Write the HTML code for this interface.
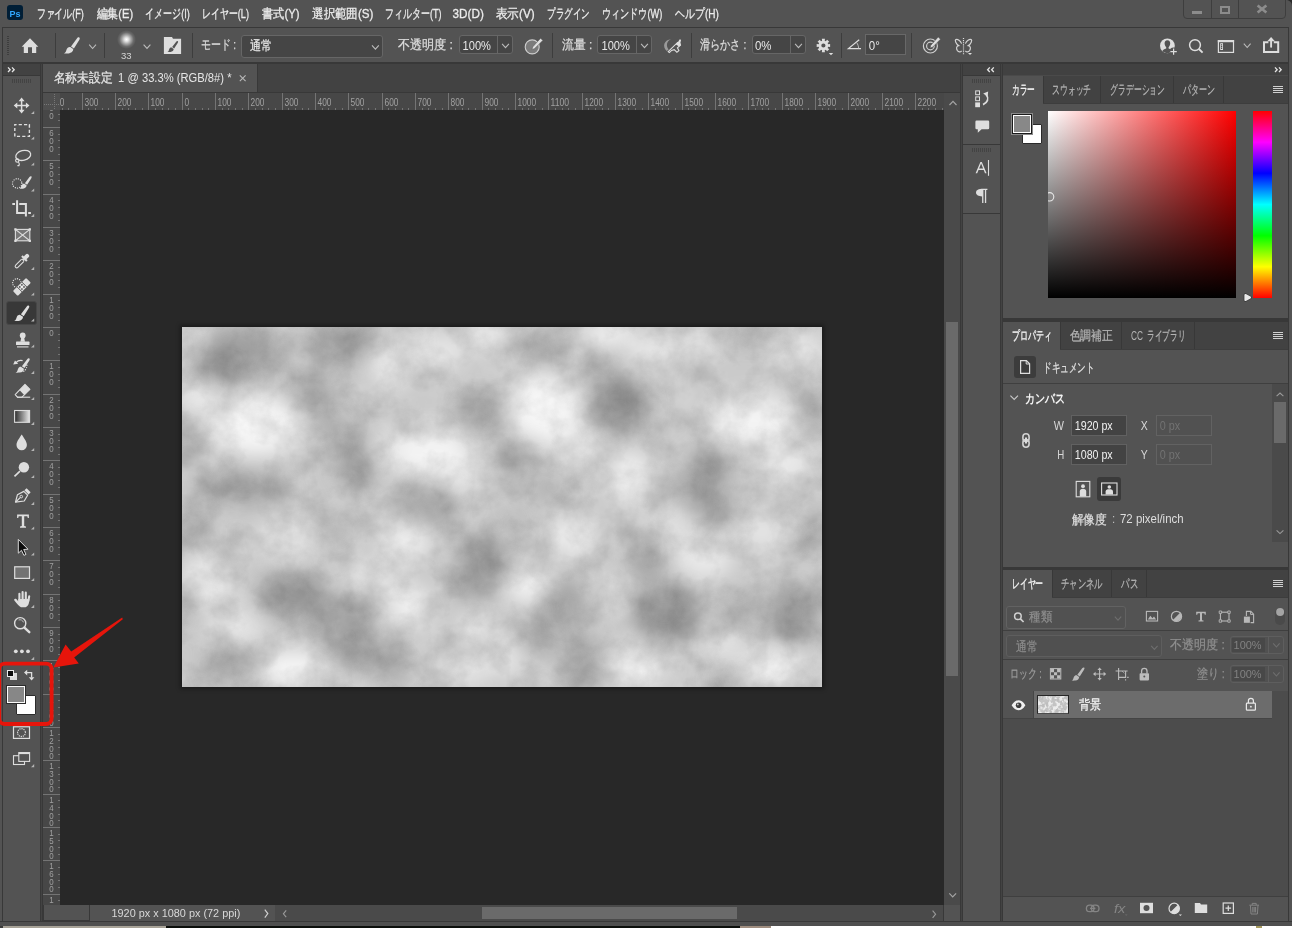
<!DOCTYPE html>
<html lang="ja"><head><meta charset="utf-8"><title>Photoshop</title>
<style>
html,body{margin:0;padding:0;}
body{width:1292px;height:928px;overflow:hidden;background:#535353;position:relative;
font-family:"Liberation Sans",sans-serif;font-size:12px;color:#dcdcdc;}
div{position:absolute;box-sizing:border-box;}
svg{position:absolute;left:0;top:0;overflow:visible;}
svg text{font-family:"Liberation Sans",sans-serif;}
</style></head><body>

<!-- menu bar -->
<div style="left:0px;top:0px;width:1292px;height:27px;background:#535353;"></div>
<div style="left:7px;top:5px;width:16px;height:15px;background:#001e36;border-radius:3px;"></div>
<div style="left:1183px;top:-2px;width:103px;height:21px;border:1px solid #3e3e3e;border-radius:0 0 4px 4px;"></div>
<div style="left:1211px;top:0px;width:1px;height:18px;background:#3e3e3e;"></div>
<div style="left:1238px;top:0px;width:1px;height:18px;background:#3e3e3e;"></div>
<div style="left:1192px;top:11px;width:10px;height:3px;background:#8c8c8c;"></div>
<div style="left:1220px;top:6px;width:10px;height:8px;border:2px solid #8c8c8c;"></div>
<!-- options bar -->
<div style="left:2px;top:27px;width:1287px;height:36px;background:#535353;border:1px solid #383838;"></div>
<div style="left:1289px;top:27px;width:3px;height:901px;background:#535353;"></div>
<div style="left:0px;top:27px;width:2px;height:901px;background:#535353;"></div>
<div style="left:55px;top:33px;width:1px;height:25px;background:#3d3d3d;"></div>
<div style="left:104px;top:33px;width:1px;height:25px;background:#3d3d3d;"></div>
<div style="left:117px;top:30px;width:19px;height:19px;border-radius:50%;background:radial-gradient(circle closest-side,#fff 0%,#e8e8e8 18%,rgba(200,200,200,.75) 45%,rgba(150,150,150,.35) 75%,rgba(83,83,83,0) 100%);"></div>
<div style="left:192px;top:33px;width:1px;height:25px;background:#3d3d3d;"></div>
<div style="left:241px;top:35px;width:142px;height:23px;background:#454545;border:1px solid #666;border-radius:3px;"></div>
<div style="left:459px;top:35px;width:54px;height:19px;background:#454545;border:1px solid #666;border-radius:3px;"></div>
<div style="left:497px;top:36px;width:1px;height:17px;background:#666;"></div>
<div style="left:552px;top:33px;width:1px;height:25px;background:#3d3d3d;"></div>
<div style="left:597px;top:35px;width:55px;height:19px;background:#454545;border:1px solid #666;border-radius:3px;"></div>
<div style="left:636px;top:36px;width:1px;height:17px;background:#666;"></div>
<div style="left:691px;top:33px;width:1px;height:25px;background:#3d3d3d;"></div>
<div style="left:752px;top:35px;width:54px;height:19px;background:#454545;border:1px solid #666;border-radius:3px;"></div>
<div style="left:790px;top:36px;width:1px;height:17px;background:#666;"></div>
<div style="left:841px;top:33px;width:1px;height:25px;background:#3d3d3d;"></div>
<div style="left:865px;top:34px;width:41px;height:21px;background:#454545;border:1px solid #686868;"></div>
<div style="left:911px;top:33px;width:1px;height:25px;background:#3d3d3d;"></div>
<!-- workspace -->
<div style="left:2px;top:63px;width:1287px;height:862px;background:#383838;"></div>
<div style="left:41px;top:64px;width:1px;height:857px;background:#434343;"></div>
<div style="left:961px;top:64px;width:1px;height:857px;background:#434343;"></div>
<div style="left:1001px;top:64px;width:1px;height:857px;background:#434343;"></div>
<div style="left:3px;top:64px;width:37px;height:857px;background:#535353;"></div>
<div style="left:3px;top:64px;width:37px;height:11px;background:#424242;"></div>
<div style="left:3px;top:75px;width:37px;height:1px;background:#383838;"></div>
<div style="left:43px;top:64px;width:917px;height:28px;background:#424242;"></div>
<div style="left:43px;top:64px;width:214px;height:28px;background:#535353;"></div>
<div style="left:43px;top:92px;width:917px;height:1px;background:#383838;"></div>
<div style="left:43px;top:93px;width:901px;height:17px;background:#474747;"></div>
<div style="left:43px;top:93px;width:17px;height:812px;background:#474747;"></div>
<div style="left:43px;top:93px;width:17px;height:17px;background:#4f4f4f;"></div>
<div style="left:60px;top:110px;width:884px;height:795px;background:#282828;"></div>
<div style="left:944px;top:93px;width:16px;height:812px;background:#4a4a4a;"></div>
<div style="left:946px;top:322px;width:12px;height:354px;background:#6a6a6a;"></div>
<div style="left:43px;top:905px;width:917px;height:16px;background:#4a4a4a;"></div>
<div style="left:43px;top:905px;width:232px;height:16px;background:#535353;"></div>
<div style="left:43px;top:905px;width:47px;height:16px;border:1px solid #383838;border-top:none;background:#535353;"></div>
<div style="left:482px;top:907px;width:255px;height:12px;background:#6a6a6a;"></div>
<div style="left:944px;top:905px;width:16px;height:16px;background:#535353;"></div>
<div style="left:943px;top:905px;width:18px;height:16px;border-left:1px solid #383838;"></div>
<div style="left:963px;top:64px;width:37px;height:857px;background:#535353;"></div>
<div style="left:963px;top:64px;width:37px;height:11px;background:#424242;"></div>
<div style="left:963px;top:75px;width:37px;height:1px;background:#383838;"></div>
<div style="left:963px;top:144px;width:37px;height:1.4px;background:#383838;"></div>
<div style="left:963px;top:213px;width:37px;height:1px;background:#383838;"></div>
<div style="left:1003px;top:64px;width:285px;height:12px;background:#414141;"></div>
<div style="left:1003px;top:75px;width:285px;height:1px;background:#4a4a4a;"></div>
<div style="left:1003px;top:76px;width:285px;height:242px;background:#535353;"></div>
<div style="left:1003px;top:76px;width:285px;height:27px;background:#424242;"></div>
<div style="left:1003px;top:322px;width:285px;height:245px;background:#535353;"></div>
<div style="left:1003px;top:322px;width:285px;height:27px;background:#424242;"></div>
<div style="left:1003px;top:570px;width:285px;height:351px;background:#535353;"></div>
<div style="left:1003px;top:570px;width:285px;height:27px;background:#424242;"></div>
<div style="left:0px;top:921px;width:1292px;height:1px;background:#383838;"></div>
<div style="left:0px;top:922px;width:1292px;height:4px;background:#4f4f4f;"></div>
<div style="left:0px;top:926px;width:1292px;height:2px;background:#ffffff;"></div>
<div style="left:0px;top:926px;width:166px;height:2px;background:#a8a398;"></div>
<div style="left:0px;top:926px;width:3px;height:2px;background:#3a3a3a;"></div>
<div style="left:166px;top:926px;width:574px;height:2px;background:#0c0f0c;"></div>
<div style="left:740px;top:926px;width:31px;height:2px;background:#a08e80;"></div>
<div style="left:1256px;top:926px;width:6px;height:2px;background:#a89c60;"></div>
<!-- tools -->
<div style="left:6px;top:301px;width:31px;height:24px;background:#383838;border:1px solid #474747;border-radius:3px;"></div>
<div style="left:10.1px;top:673px;width:6.9px;height:7.2px;background:#dcdcdc;"></div>
<div style="left:6.9px;top:670px;width:7.2px;height:7px;background:#0c0c0c;border:1.1px solid #ececec;"></div>
<div style="left:16.4px;top:695.4px;width:19.4px;height:19.2px;background:#fff;border:1px solid #2c2c2c;border-radius:1px;"></div>
<div style="left:7.2px;top:686.1px;width:17.5px;height:17.4px;background:#878787;border:1.3px solid #fafafa;outline:1px solid #2c2c2c;"></div>
<!-- document canvas -->
<div style="left:180px;top:325px;width:644px;height:364px;background:rgba(0,0,0,.35);filter:blur(2px);"></div>
<svg style="left:182px;top:327px" width="640" height="360" viewBox="0 0 640 360">
<defs><filter id="bl" x="-20%" y="-20%" width="140%" height="140%"><feGaussianBlur stdDeviation="10"/></filter>
<filter id="nz" x="0" y="0" width="100%" height="100%"><feTurbulence type="fractalNoise" baseFrequency="0.035" numOctaves="4" seed="11"/><feColorMatrix type="matrix" values="0 0 0 0 0  0 0 0 0 0  0 0 0 0 0  1.6 0 0 0 -0.55"/></filter>
<filter id="nz2" x="0" y="0" width="100%" height="100%"><feTurbulence type="fractalNoise" baseFrequency="0.035" numOctaves="4" seed="23"/><feColorMatrix type="matrix" values="0 0 0 0 1  0 0 0 0 1  0 0 0 0 1  1.6 0 0 0 -0.55"/></filter>
<clipPath id="cc"><rect width="640" height="360"/></clipPath></defs>
<g clip-path="url(#cc)"><rect width="640" height="360" fill="#cacaca"/>
<g filter="url(#bl)">
<ellipse cx="57" cy="27" rx="42" ry="26" fill="#8a8a8a" opacity="0.68"/>
<ellipse cx="32" cy="45" rx="28" ry="20" fill="#8a8a8a" opacity="0.45"/>
<ellipse cx="161" cy="17" rx="36" ry="22" fill="#8a8a8a" opacity="0.68"/>
<ellipse cx="129" cy="67" rx="28" ry="22" fill="#8a8a8a" opacity="0.45"/>
<ellipse cx="173" cy="134" rx="22" ry="30" fill="#8a8a8a" opacity="0.68"/>
<ellipse cx="300" cy="84" rx="24" ry="20" fill="#8a8a8a" opacity="0.63"/>
<ellipse cx="62" cy="161" rx="50" ry="17" fill="#8a8a8a" opacity="0.63"/>
<ellipse cx="248" cy="173" rx="26" ry="16" fill="#8a8a8a" opacity="0.54"/>
<ellipse cx="153" cy="99" rx="20" ry="18" fill="#8a8a8a" opacity="0.41"/>
<ellipse cx="5" cy="106" rx="14" ry="22" fill="#8a8a8a" opacity="0.41"/>
<ellipse cx="362" cy="22" rx="24" ry="16" fill="#8a8a8a" opacity="0.54"/>
<ellipse cx="439" cy="79" rx="32" ry="26" fill="#8a8a8a" opacity="0.81"/>
<ellipse cx="421" cy="45" rx="16" ry="16" fill="#8a8a8a" opacity="0.54"/>
<ellipse cx="335" cy="129" rx="22" ry="15" fill="#8a8a8a" opacity="0.54"/>
<ellipse cx="525" cy="149" rx="26" ry="30" fill="#8a8a8a" opacity="0.63"/>
<ellipse cx="568" cy="7" rx="26" ry="12" fill="#8a8a8a" opacity="0.45"/>
<ellipse cx="632" cy="84" rx="18" ry="24" fill="#8a8a8a" opacity="0.45"/>
<ellipse cx="370" cy="161" rx="24" ry="14" fill="#8a8a8a" opacity="0.36"/>
<ellipse cx="498" cy="165" rx="22" ry="14" fill="#8a8a8a" opacity="0.36"/>
<ellipse cx="109" cy="267" rx="32" ry="26" fill="#8a8a8a" opacity="0.72"/>
<ellipse cx="161" cy="294" rx="32" ry="30" fill="#8a8a8a" opacity="0.68"/>
<ellipse cx="175" cy="322" rx="24" ry="20" fill="#8a8a8a" opacity="0.54"/>
<ellipse cx="297" cy="244" rx="26" ry="36" fill="#8a8a8a" opacity="0.68"/>
<ellipse cx="42" cy="338" rx="18" ry="22" fill="#8a8a8a" opacity="0.68"/>
<ellipse cx="12" cy="202" rx="22" ry="20" fill="#8a8a8a" opacity="0.41"/>
<ellipse cx="248" cy="186" rx="30" ry="14" fill="#8a8a8a" opacity="0.54"/>
<ellipse cx="205" cy="340" rx="24" ry="18" fill="#8a8a8a" opacity="0.45"/>
<ellipse cx="149" cy="202" rx="22" ry="16" fill="#8a8a8a" opacity="0.36"/>
<ellipse cx="0" cy="284" rx="12" ry="24" fill="#8a8a8a" opacity="0.36"/>
<ellipse cx="483" cy="286" rx="36" ry="30" fill="#8a8a8a" opacity="0.81"/>
<ellipse cx="464" cy="234" rx="18" ry="18" fill="#8a8a8a" opacity="0.63"/>
<ellipse cx="382" cy="279" rx="22" ry="28" fill="#8a8a8a" opacity="0.59"/>
<ellipse cx="402" cy="333" rx="20" ry="26" fill="#8a8a8a" opacity="0.63"/>
<ellipse cx="357" cy="309" rx="22" ry="20" fill="#8a8a8a" opacity="0.45"/>
<ellipse cx="612" cy="286" rx="30" ry="30" fill="#8a8a8a" opacity="0.68"/>
<ellipse cx="632" cy="205" rx="16" ry="22" fill="#8a8a8a" opacity="0.45"/>
<ellipse cx="530" cy="183" rx="26" ry="12" fill="#8a8a8a" opacity="0.5"/>
<ellipse cx="320" cy="230" rx="14" ry="20" fill="#8a8a8a" opacity="0.45"/>
<ellipse cx="332" cy="192" rx="18" ry="14" fill="#8a8a8a" opacity="0.36"/>
<ellipse cx="555" cy="284" rx="22" ry="22" fill="#8a8a8a" opacity="0.36"/>
<ellipse cx="550" cy="354" rx="30" ry="10" fill="#8a8a8a" opacity="0.36"/>
<ellipse cx="74" cy="99" rx="46" ry="30" fill="#ffffff" opacity="0.82"/>
<ellipse cx="210" cy="37" rx="20" ry="26" fill="#ffffff" opacity="0.6"/>
<ellipse cx="260" cy="25" rx="26" ry="18" fill="#ffffff" opacity="0.52"/>
<ellipse cx="305" cy="8" rx="20" ry="12" fill="#ffffff" opacity="0.69"/>
<ellipse cx="248" cy="124" rx="40" ry="25" fill="#ffffff" opacity="0.77"/>
<ellipse cx="198" cy="126" rx="18" ry="16" fill="#ffffff" opacity="0.43"/>
<ellipse cx="7" cy="7" rx="16" ry="12" fill="#ffffff" opacity="0.52"/>
<ellipse cx="15" cy="69" rx="18" ry="18" fill="#ffffff" opacity="0.6"/>
<ellipse cx="280" cy="149" rx="22" ry="16" fill="#ffffff" opacity="0.52"/>
<ellipse cx="426" cy="7" rx="26" ry="12" fill="#ffffff" opacity="0.77"/>
<ellipse cx="362" cy="82" rx="36" ry="34" fill="#ffffff" opacity="0.82"/>
<ellipse cx="473" cy="25" rx="26" ry="18" fill="#ffffff" opacity="0.52"/>
<ellipse cx="568" cy="92" rx="42" ry="26" fill="#ffffff" opacity="0.77"/>
<ellipse cx="449" cy="151" rx="20" ry="26" fill="#ffffff" opacity="0.77"/>
<ellipse cx="605" cy="136" rx="26" ry="20" fill="#ffffff" opacity="0.6"/>
<ellipse cx="617" cy="25" rx="24" ry="20" fill="#ffffff" opacity="0.52"/>
<ellipse cx="394" cy="119" rx="22" ry="18" fill="#ffffff" opacity="0.52"/>
<ellipse cx="518" cy="17" rx="22" ry="14" fill="#ffffff" opacity="0.47"/>
<ellipse cx="106" cy="212" rx="30" ry="18" fill="#ffffff" opacity="0.56"/>
<ellipse cx="25" cy="252" rx="24" ry="22" fill="#ffffff" opacity="0.65"/>
<ellipse cx="111" cy="341" rx="32" ry="18" fill="#ffffff" opacity="0.82"/>
<ellipse cx="223" cy="215" rx="26" ry="18" fill="#ffffff" opacity="0.69"/>
<ellipse cx="188" cy="254" rx="22" ry="18" fill="#ffffff" opacity="0.52"/>
<ellipse cx="228" cy="279" rx="22" ry="20" fill="#ffffff" opacity="0.73"/>
<ellipse cx="285" cy="341" rx="26" ry="16" fill="#ffffff" opacity="0.52"/>
<ellipse cx="297" cy="299" rx="20" ry="16" fill="#ffffff" opacity="0.52"/>
<ellipse cx="50" cy="299" rx="26" ry="18" fill="#ffffff" opacity="0.52"/>
<ellipse cx="389" cy="210" rx="26" ry="20" fill="#ffffff" opacity="0.6"/>
<ellipse cx="345" cy="257" rx="22" ry="20" fill="#ffffff" opacity="0.73"/>
<ellipse cx="523" cy="232" rx="28" ry="20" fill="#ffffff" opacity="0.6"/>
<ellipse cx="456" cy="338" rx="26" ry="20" fill="#ffffff" opacity="0.77"/>
<ellipse cx="592" cy="341" rx="34" ry="16" fill="#ffffff" opacity="0.77"/>
<ellipse cx="327" cy="333" rx="14" ry="18" fill="#ffffff" opacity="0.52"/>
<ellipse cx="580" cy="205" rx="22" ry="18" fill="#ffffff" opacity="0.52"/>
<ellipse cx="434" cy="267" rx="16" ry="16" fill="#ffffff" opacity="0.47"/>
<ellipse cx="493" cy="200" rx="22" ry="14" fill="#ffffff" opacity="0.43"/>
<ellipse cx="543" cy="316" rx="20" ry="14" fill="#ffffff" opacity="0.47"/>
</g>
<rect width="640" height="360" filter="url(#nz)" opacity=".14"/>
<rect width="640" height="360" filter="url(#nz2)" opacity=".16"/>
</g></svg>
<!-- rulers -->
<!-- color panel -->
<div style="left:1048px;top:111px;width:188px;height:187px;background:linear-gradient(to top,#000,rgba(0,0,0,0)),linear-gradient(to right,#fff,#f00);"></div>
<div style="left:1253px;top:111px;width:19px;height:187px;background:linear-gradient(to bottom,#f00 0%,#f0f 16.7%,#00f 33.3%,#0ff 50%,#0f0 66.7%,#ff0 83.3%,#f00 100%);"></div>
<!-- panels -->
<div style="left:257px;top:64px;width:1px;height:28px;background:#383838;"></div>
<div style="left:1003px;top:76px;width:40px;height:28px;background:#535353;"></div>
<div style="left:1043px;top:76px;width:1px;height:27px;background:#383838;"></div>
<div style="left:1100px;top:76px;width:1px;height:27px;background:#383838;"></div>
<div style="left:1173px;top:76px;width:1px;height:27px;background:#383838;"></div>
<div style="left:1223px;top:76px;width:1px;height:27px;background:#383838;"></div>
<div style="left:1043px;top:103px;width:245px;height:1px;background:#3d3d3d;"></div>
<div style="left:1022.4px;top:124.3px;width:19.3px;height:19.5px;background:#fff;border:1px solid #2a2a2a;border-radius:1px;"></div>
<div style="left:1013px;top:115px;width:18px;height:18px;background:#888;border:1.2px solid #fff;outline:1px solid #1c1c1c;outline-offset:0;box-shadow:0 0 0 2px #8a8a8a;"></div>
<div style="left:1003px;top:322px;width:57px;height:28px;background:#535353;"></div>
<div style="left:1060px;top:322px;width:1px;height:27px;background:#383838;"></div>
<div style="left:1121px;top:322px;width:1px;height:27px;background:#383838;"></div>
<div style="left:1194px;top:322px;width:1px;height:27px;background:#383838;"></div>
<div style="left:1060px;top:349px;width:228px;height:1px;background:#3d3d3d;"></div>
<div style="left:1014px;top:356px;width:22px;height:22px;background:#3c3c3c;border-radius:3px;"></div>
<div style="left:1003px;top:383px;width:285px;height:1px;background:#3f3f3f;"></div>
<div style="left:1071px;top:415px;width:56px;height:21px;background:#434343;border:1px solid #616161;"></div>
<div style="left:1156px;top:415px;width:56px;height:21px;background:#515151;border:1px solid #626262;"></div>
<div style="left:1071px;top:444px;width:56px;height:21px;background:#434343;border:1px solid #616161;"></div>
<div style="left:1156px;top:444px;width:56px;height:21px;background:#515151;border:1px solid #626262;"></div>
<div style="left:1096.6px;top:476.8px;width:24.4px;height:24.4px;background:#3a3a3a;border-radius:3px;"></div>
<div style="left:1272px;top:384px;width:16px;height:158px;background:#4a4a4a;"></div>
<div style="left:1274px;top:402px;width:12px;height:41px;background:#6a6a6a;"></div>
<div style="left:1003px;top:570px;width:49px;height:28px;background:#535353;"></div>
<div style="left:1052px;top:570px;width:1px;height:27px;background:#383838;"></div>
<div style="left:1111px;top:570px;width:1px;height:27px;background:#383838;"></div>
<div style="left:1146px;top:570px;width:1px;height:27px;background:#383838;"></div>
<div style="left:1052px;top:597px;width:236px;height:1px;background:#3d3d3d;"></div>
<div style="left:1006.4px;top:606.3px;width:119.2px;height:22.3px;border:1px solid #626262;border-radius:3px;background:#515151;"></div>
<div style="left:1275.4px;top:608px;width:9.4px;height:17.2px;border-radius:4.7px;background:#4a4a4a;"></div>
<div style="left:1003px;top:630px;width:285px;height:1px;background:#3f3f3f;"></div>
<div style="left:1006.4px;top:635.4px;width:155.2px;height:21.8px;border:1px solid #5e5e5e;border-radius:3px;background:#505050;"></div>
<div style="left:1230px;top:635.6px;width:54px;height:18.4px;border:1px solid #5e5e5e;border-radius:3px;background:#515151;"></div>
<div style="left:1232.4px;top:637.6px;width:32.4px;height:14.399999999999999px;background:#484848;"></div>
<div style="left:1268.4px;top:636.6px;width:1px;height:16.4px;background:#5e5e5e;"></div>
<div style="left:1003px;top:659px;width:285px;height:1px;background:#3f3f3f;"></div>
<div style="left:1230px;top:664.6px;width:54px;height:18.4px;border:1px solid #5e5e5e;border-radius:3px;background:#515151;"></div>
<div style="left:1232.4px;top:666.6px;width:32.4px;height:14.399999999999999px;background:#484848;"></div>
<div style="left:1268.4px;top:665.6px;width:1px;height:16.4px;background:#5e5e5e;"></div>
<div style="left:1003px;top:691px;width:285px;height:205px;background:#4c4c4c;"></div>
<div style="left:1033px;top:691px;width:239px;height:27px;background:#6c6c6c;"></div>
<div style="left:1003px;top:691px;width:30px;height:27px;background:#535353;"></div>
<div style="left:1003px;top:718px;width:269px;height:1px;background:#444;"></div>
<div style="left:1032.5px;top:691px;width:1px;height:27px;background:#454545;"></div>
<div style="left:1037.2px;top:695px;width:31.8px;height:19.2px;border:1px solid #272727;border-bottom-color:#4c4c4c;background:#cdcdcd;overflow:hidden;"><svg width="30" height="18" viewBox="0 0 30 18" style="left:0;top:0;overflow:hidden"><defs><filter id="tnz" x="0" y="0" width="100%" height="100%"><feTurbulence type="fractalNoise" baseFrequency="0.28" numOctaves="2" seed="5"/><feColorMatrix type="matrix" values="0 0 0 0 0.5  0 0 0 0 0.5  0 0 0 0 0.5  5 0 0 0 -2.1"/></filter><filter id="tnz2" x="0" y="0" width="100%" height="100%"><feTurbulence type="fractalNoise" baseFrequency="0.28" numOctaves="2" seed="9"/><feColorMatrix type="matrix" values="0 0 0 0 1  0 0 0 0 1  0 0 0 0 1  0 5 0 0 -2.2"/></filter></defs><rect width="30" height="18" fill="#c4c4c4"/><rect width="30" height="18" filter="url(#tnz)" opacity=".7"/><rect width="30" height="18" filter="url(#tnz2)" opacity=".7"/></svg></div>
<div style="left:1003px;top:896px;width:285px;height:1px;background:#3f3f3f;"></div>
<svg id="icons" width="1292" height="928" viewBox="0 0 1292 928">
<path d="M1257.6 5.4L1266.4 12.6M1266.4 5.4L1257.6 12.6" stroke="#8c8c8c" stroke-width="2.6" fill="none"/>
<path d="M1286 0H1292V6C1292 2.5 1289.5 0 1286 0Z" fill="#2b2b2b"/>
<path d="M8 36V56" stroke="#3d3d3d" stroke-width="2" stroke-dasharray="1 1" shape-rendering="crispEdges"/>
<path d="M30 38.3L38.3 46.7H36.2V53H32V47.3H28V53H23.8V46.7H21.7Z" fill="#dedede"/>
<g transform="translate(64 37.4) scale(1.0)" fill="#dedede"><path d="M15.3 0.2C16.1 0.8 15.7 1.9 15.1 2.8L9.9 11L7 9L12.9 1.1C13.5 0.3 14.5 -0.4 15.3 0.2Z"/><path d="M6.3 9.7L9.2 11.7C9.4 14.1 7.2 15.7 4.6 16C3 16.2 1.4 16.2 0 16.1C2.2 15 2 13.2 2.8 11.6C3.5 10.2 4.9 9.4 6.3 9.7Z"/></g>
<path d="M89.2 44.7L92.6 48.5L96.0 44.7" stroke="#bcbcbc" stroke-width="1.1" fill="none"/>
<path d="M143.6 44.6L147.0 48.4L150.4 44.6" stroke="#bcbcbc" stroke-width="1.1" fill="none"/>
<path d="M163.9 36.9H172L173 38.7H181.1V53.9H163.9Z" fill="#dedede"/>
<g transform="translate(167.4 41) scale(0.68)" fill="#535353"><path d="M15.3 0.2C16.1 0.8 15.7 1.9 15.1 2.8L9.9 11L7 9L12.9 1.1C13.5 0.3 14.5 -0.4 15.3 0.2Z"/><path d="M6.3 9.7L9.2 11.7C9.4 14.1 7.2 15.7 4.6 16C3 16.2 1.4 16.2 0 16.1C2.2 15 2 13.2 2.8 11.6C3.5 10.2 4.9 9.4 6.3 9.7Z"/></g>
<path d="M372.0 45.4L375.4 49.2L378.8 45.4" stroke="#bcbcbc" stroke-width="1.1" fill="none"/>
<path d="M502.1 43.9L505.5 47.7L508.9 43.9" stroke="#bcbcbc" stroke-width="1.1" fill="none"/>
<circle cx="532.2" cy="46.9" r="7" fill="#7b7b7b" stroke="#cfcfcf" stroke-width="1.1"/><path d="M540.6 38.2L542.8 40.4L534.4 48.8L532 49.4L532.6 47Z" fill="#dedede" stroke="#535353" stroke-width=".5"/>
<path d="M641.1 43.9L644.5 47.7L647.9 43.9" stroke="#bcbcbc" stroke-width="1.1" fill="none"/>
<path d="M671 39.2C664.5 39.6 661.6 46.2 666.8 51L668.6 49.4C665.6 45.4 666.8 41.2 671 39.2Z" fill="#9a9a9a"/><path d="M668.2 51.6L677.6 42.4L680.4 45.2L677.4 47.8L678.9 50.6L676.9 52.2L674.2 49.6L671.6 50.4L669.4 52.6Z" fill="none" stroke="#dedede" stroke-width="1.1"/><path d="M675.6 44.2L678.6 41.2L679.4 39.6L680.8 39.4L681 40.8L680.4 42.2L681 45L679 46.6Z" fill="#dedede"/>
<path d="M795.1 43.9L798.5 47.7L801.9 43.9" stroke="#bcbcbc" stroke-width="1.1" fill="none"/>
<path d="M830.12 43.95L830.12 47.05L828.12 46.81L827.66 47.91L829.25 49.16L827.06 51.35L825.81 49.76L824.71 50.22L824.95 52.22L821.85 52.22L822.09 50.22L820.99 49.76L819.74 51.35L817.55 49.16L819.14 47.91L818.68 46.81L816.68 47.05L816.68 43.95L818.68 44.19L819.14 43.09L817.55 41.84L819.74 39.65L820.99 41.24L822.09 40.78L821.85 38.78L824.95 38.78L824.71 40.78L825.81 41.24L827.06 39.65L829.25 41.84L827.66 43.09L828.12 44.19Z M825.5 45.5A2.1 2.1 0 1 0 821.3 45.5A2.1 2.1 0 1 0 825.5 45.5Z" fill="#dedede" fill-rule="evenodd"/>
<path d="M828.8 53H833.2L831 55.2Z" fill="#dedede"/>
<path d="M859.2 39.8L848.4 48.6H861" stroke="#dedede" stroke-width="1.2" fill="none"/><path d="M856.6 42.6C858 44.4 858.6 46.4 858.6 48.4" stroke="#bdbdbd" stroke-width="1" fill="none"/>
<circle cx="930.4" cy="46" r="7" fill="none" stroke="#cfcfcf" stroke-width="1.2"/><circle cx="930.4" cy="46" r="3.8" fill="none" stroke="#cfcfcf" stroke-width="1.2"/><path d="M938.2 36.9L940.5 39.2L932.6 47.2L930 48L930.7 45.4Z" fill="#dedede" stroke="#535353" stroke-width=".6"/>
<path d="M963.5 38V55" stroke="#e0e0e0" stroke-width="1.2" stroke-dasharray="1.1 1"/><path d="M961.6 43.6C960.4 40.6 957.6 38.8 955.8 39.6C954.6 40.4 956 44 958.6 45.6C956.4 46 956 48.6 957.4 50.6C958.6 52.2 960.4 52.4 961.6 50.8" stroke="#d4d4d4" stroke-width="1.2" fill="none"/><path d="M965.4 43.6C966.6 40.6 969.4 38.8 971.2 39.6C972.4 40.4 971 44 968.4 45.6C970.6 46 971 48.6 969.6 50.6C968.4 52.2 966.6 52.4 965.4 50.8" stroke="#d4d4d4" stroke-width="1.2" fill="none"/><path d="M968 53H972L970 55Z" fill="#dedede"/>
<circle cx="1167.4" cy="45.8" r="7.4" fill="#dedede"/><path d="M1167.4 40.2C1165.4 40.2 1164.4 41.8 1164.6 43.8C1164.8 45.4 1165.4 46.6 1166.2 47.2V48.4C1164.4 48.9 1162.9 49.7 1162.4 51C1163.8 52.4 1165.6 53.2 1167.4 53.2C1169.2 53.2 1171 52.4 1172.4 51C1171.9 49.7 1170.4 48.9 1168.6 48.4V47.2C1169.4 46.6 1170 45.4 1170.2 43.8C1170.4 41.8 1169.4 40.2 1167.4 40.2Z" fill="#535353"/><circle cx="1173.6" cy="51.6" r="4" fill="#535353"/><path d="M1173.6 48.4V54.8M1170.4 51.6H1176.8" stroke="#dedede" stroke-width="1.2"/>
<circle cx="1195" cy="45.1" r="5.4" fill="none" stroke="#dedede" stroke-width="1.5"/><path d="M1198.9 49L1202.6 52.6" stroke="#dedede" stroke-width="1.9"/>
<rect x="1218.4" y="40.6" width="15.1" height="11.8" fill="none" stroke="#dedede" stroke-width="1.2"/><path d="M1217.8 41.2H1234.1" stroke="#dedede" stroke-width="2"/><rect x="1220.2" y="43.2" width="2.8" height="6.8" fill="#dedede"/><path d="M1221 44.2h1.2v1.2h-1.2zM1221 46h1.2v1.2h-1.2zM1221 47.8h1.2v1.2h-1.2z" fill="#535353"/>
<path d="M1243.8 43.7L1247.2 47.5L1250.6 43.7" stroke="#bcbcbc" stroke-width="1.1" fill="none"/>
<path d="M1268.4 42.3H1264V51.9H1278.2V42.3H1273.8" stroke="#dedede" stroke-width="2" fill="none"/><path d="M1271.1 47.6V39.5" stroke="#dedede" stroke-width="1.9"/><path d="M1267.3 41.2L1271.1 37L1274.9 41.2Z" fill="#dedede"/>
<path d="M12 81H32" stroke="#434343" stroke-width="4" stroke-dasharray="1 1" shape-rendering="crispEdges"/>
<path d="M8 67.4L10.2 69.7L8 72M12 67.4L14.2 69.7L12 72" stroke="#e4e4e4" stroke-width="1.3" fill="none"/>
<path d="M15.6 105.5H27.6M21.6 99.5V111.5" stroke="#dedede" stroke-width="1.5"/><path d="M21.6 97.6L24.6 101.2H18.6ZM21.6 113.4L24.6 109.8H18.6ZM13.7 105.5L17.3 102.5V108.5ZM29.5 105.5L25.9 102.5V108.5Z" fill="#dedede"/>
<path d="M34.2 110.9V114.1H31.0Z" fill="#b4b4b4"/>
<rect x="14.8" y="124.6" width="14.6" height="11.8" fill="none" stroke="#dedede" stroke-width="1.4" stroke-dasharray="3.2 2.1" stroke-dashoffset="1.4"/>
<path d="M34.2 136.4V139.6H31.0Z" fill="#b4b4b4"/>
<ellipse cx="23.2" cy="155.4" rx="7.6" ry="4.9" transform="rotate(-14 23.2 155.4)" fill="none" stroke="#dedede" stroke-width="1.3"/><circle cx="17.3" cy="160.6" r="1.7" fill="none" stroke="#dedede" stroke-width="1.1"/><path d="M18.5 162C19.4 163.2 19.4 164.6 19 165.6H17.4" fill="none" stroke="#dedede" stroke-width="1.1"/>
<path d="M34.2 162.4V165.6H31.0Z" fill="#b4b4b4"/>
<circle cx="17.2" cy="183.4" r="4.7" fill="none" stroke="#dedede" stroke-width="1.35" stroke-linecap="round" stroke-dasharray="0.01 2.27"/>
<g transform="translate(19.4 176.2) scale(0.78)" fill="#dedede"><path d="M15.3 0.2C16.1 0.8 15.7 1.9 15.1 2.8L9.9 11L7 9L12.9 1.1C13.5 0.3 14.5 -0.4 15.3 0.2Z"/><path d="M6.3 9.7L9.2 11.7C9.4 14.1 7.2 15.7 4.6 16C3 16.2 1.4 16.2 0 16.1C2.2 15 2 13.2 2.8 11.6C3.5 10.2 4.9 9.4 6.3 9.7Z"/></g>
<path d="M34.2 188.4V191.6H31.0Z" fill="#b4b4b4"/>
<path d="M17.1 200.2V213.1H24.8M19.2 204.1H25.9V216.4M12.3 204.1H15M28.2 213.1H30.9" fill="none" stroke="#dedede" stroke-width="2"/>
<path d="M34.2 213.8V217.0H31.0Z" fill="#b4b4b4"/>
<rect x="15.4" y="229.4" width="14.4" height="11.4" fill="#777" stroke="#dedede" stroke-width="1.1"/><path d="M15.4 229.4L29.8 240.8M29.8 229.4L15.4 240.8" stroke="#dedede" stroke-width="1.1"/><path d="M14.3 228.3h2.2v2.2h-2.2zM28.7 228.3h2.2v2.2h-2.2zM14.3 239.7h2.2v2.2h-2.2zM28.7 239.7h2.2v2.2h-2.2z" fill="#dedede"/>
<g transform="translate(21.7 261.3) rotate(45)"><rect x="-2" y="-9.6" width="4" height="5.6" rx="1.9" fill="#dedede"/><rect x="-3.5" y="-4.9" width="7" height="2.1" fill="#dedede"/><rect x="-1.3" y="-3" width="2.6" height="1.6" fill="#dedede"/><path d="M-1.6 -1.6V6.6C-1.6 7.8 -0.9 8.6 0 8.6C0.9 8.6 1.6 7.8 1.6 6.6V-1.6" fill="none" stroke="#dedede" stroke-width="1.1"/></g>
<path d="M34.2 266.7V269.9H31.0Z" fill="#b4b4b4"/>
<circle cx="16.9" cy="283" r="4.3" fill="none" stroke="#dedede" stroke-width="1.35" stroke-linecap="round" stroke-dasharray="0.01 2.25"/><g transform="rotate(-45 21.9 286.9)"><rect x="12" y="282.9" width="19.8" height="8" rx="1.4" fill="#535353"/><rect x="12.55" y="283.45" width="18.7" height="6.9" rx="1.1" fill="#dedede"/><path d="M18.5 283.2V290.6M25.3 283.2V290.6" stroke="#535353" stroke-width=".9"/></g><circle cx="21.9" cy="284.8" r=".85" fill="#484848"/><circle cx="19.8" cy="286.9" r=".85" fill="#484848"/><circle cx="24" cy="286.9" r=".85" fill="#484848"/><circle cx="21.9" cy="289" r=".85" fill="#484848"/><circle cx="21.9" cy="286.9" r=".8" fill="#fff"/>
<path d="M34.2 292.4V295.6H31.0Z" fill="#b4b4b4"/>
<g transform="translate(14.2 305.6) scale(0.96)" fill="#dedede"><path d="M15.3 0.2C16.1 0.8 15.7 1.9 15.1 2.8L9.9 11L7 9L12.9 1.1C13.5 0.3 14.5 -0.4 15.3 0.2Z"/><path d="M6.3 9.7L9.2 11.7C9.4 14.1 7.2 15.7 4.6 16C3 16.2 1.4 16.2 0 16.1C2.2 15 2 13.2 2.8 11.6C3.5 10.2 4.9 9.4 6.3 9.7Z"/></g>
<path d="M34.2 318.4V321.6H31.0Z" fill="#b4b4b4"/>
<circle cx="22.7" cy="335.4" r="2.9" fill="#dedede"/><path d="M21.3 337.2L20.4 341.8H25L24.1 337.2Z" fill="#dedede"/><rect x="16" y="341.6" width="13.5" height="3.4" rx=".6" fill="#dedede"/><path d="M17 346.9H28.5" stroke="#dedede" stroke-width="1.1"/>
<path d="M34.2 344.4V347.6H31.0Z" fill="#b4b4b4"/>
<g transform="translate(15.6 358.2) scale(0.9)" fill="#dedede"><path d="M15.3 0.2C16.1 0.8 15.7 1.9 15.1 2.8L9.9 11L7 9L12.9 1.1C13.5 0.3 14.5 -0.4 15.3 0.2Z"/><path d="M6.3 9.7L9.2 11.7C9.4 14.1 7.2 15.7 4.6 16C3 16.2 1.4 16.2 0 16.1C2.2 15 2 13.2 2.8 11.6C3.5 10.2 4.9 9.4 6.3 9.7Z"/></g>
<path d="M22.6 360.6C20.4 360 17.8 360.6 16 362.6" fill="none" stroke="#dedede" stroke-width="1.2"/><path d="M13.2 364.6L15 360.6L18.2 363.8Z" fill="#dedede"/><circle cx="26.9" cy="365.2" r=".7" fill="#dedede"/><circle cx="26.5" cy="367.6" r=".7" fill="#dedede"/><circle cx="25.4" cy="369.7" r=".7" fill="#dedede"/><circle cx="23.8" cy="371.3" r=".7" fill="#dedede"/>
<path d="M34.2 370.7V373.9H31.0Z" fill="#b4b4b4"/>
<path d="M25 384.4L29.9 389.3L22 397.2H17.4L15.2 394.6Z" fill="none" stroke="#dedede" stroke-width="1.1" stroke-linejoin="round"/><path d="M25 384.4L29.9 389.3L24.2 395L19.4 390.1Z" fill="#dedede"/><path d="M17 397.2H30.2" stroke="#dedede" stroke-width="1.1"/>
<path d="M34.2 396.9V400.1H31.0Z" fill="#b4b4b4"/>
<defs><linearGradient id="gtool" x1="0" x2="1" y1="0" y2="0"><stop offset="0" stop-color="#2b2b2b"/><stop offset="1" stop-color="#e8e8e8"/></linearGradient></defs><rect x="14.6" y="410.5" width="15" height="11.8" fill="url(#gtool)" stroke="#dedede" stroke-width="1.1"/>
<path d="M34.2 421.8V425.0H31.0Z" fill="#b4b4b4"/>
<path d="M21.7 434.6C20 437.4 16.5 441.6 16.5 445A5.2 5.2 0 0 0 26.9 445C26.9 441.6 23.4 437.4 21.7 434.6Z" fill="#dedede"/>
<path d="M34.2 447.9V451.1H31.0Z" fill="#b4b4b4"/>
<circle cx="23.9" cy="467.2" r="5.2" fill="#dedede"/><path d="M20 471.1L14.5 476.4" stroke="#dedede" stroke-width="1.7"/>
<path d="M34.2 474.9V478.1H31.0Z" fill="#b4b4b4"/>
<path d="M15.5 502.2L17.4 494.8L23.8 491.4L27.6 495.2L24.2 501Z" fill="none" stroke="#dedede" stroke-width="1.2" stroke-linejoin="round"/><path d="M15.7 502L20.4 497.4" stroke="#dedede" stroke-width="1.1"/><circle cx="21.3" cy="496.6" r="1.3" fill="none" stroke="#dedede" stroke-width="1"/><path d="M24.4 490.2L26.6 488.2L30.6 492.2L28.6 494.4Z" fill="#dedede"/>
<path d="M34.2 501.8V505.0H31.0Z" fill="#b4b4b4"/>
<path d="M17.1 514.4H28.9V518H27.8L27.3 516.2H24.2V526L26 526.5V527.8H20V526.5L21.8 526V516.2H18.7L18.2 518H17.1Z" fill="#dedede"/>
<path d="M34.2 526.4V529.6H31.0Z" fill="#b4b4b4"/>
<path d="M18.3 539.4V553.2L21.5 550.3L23.9 555.4L26 554.4L23.7 549.5L28 549.2Z" fill="#0c0c0c" stroke="#d6d6d6" stroke-width="1" stroke-linejoin="round"/>
<path d="M34.2 552.4V555.6H31.0Z" fill="#b4b4b4"/>
<rect x="14.7" y="566.8" width="14.8" height="11.6" fill="#737373" stroke="#dedede" stroke-width="1.2"/>
<path d="M34.2 577.9V581.1H31.0Z" fill="#b4b4b4"/>
<path d="M19.4 601V593.8M22.6 600V592M25.8 600V592.6M28.3 601L29.2 596.4" stroke="#dedede" stroke-width="2.1" stroke-linecap="round"/><path d="M18.3 599H29.4L29 602.4C28.6 605 27.4 606.4 25.6 607.3H21C19.2 606.4 16.8 603.4 14.4 600.4C13.7 599.4 14.6 598.2 15.8 598.8C16.8 599.4 17.7 600.6 18.3 601.6Z" fill="#dedede"/>
<path d="M34.2 604.7V607.9H31.0Z" fill="#b4b4b4"/>
<circle cx="20.2" cy="623.2" r="5.6" fill="none" stroke="#dedede" stroke-width="1.4"/><path d="M24.4 627.6L29.3 632.2" stroke="#dedede" stroke-width="2.4" stroke-linecap="round"/><path d="M18.6 620C20.6 619.2 22.8 620.2 23.5 622.4" fill="none" stroke="#c4c4c4" stroke-width=".9"/>
<circle cx="15.8" cy="651.3" r="1.9" fill="#dedede"/><circle cx="21.9" cy="651.3" r="1.9" fill="#dedede"/><circle cx="28" cy="651.3" r="1.9" fill="#dedede"/>
<path d="M34.2 656.7V659.9H31.0Z" fill="#b4b4b4"/>
<path d="M26.4 672.6H31.6V677.6" fill="none" stroke="#dedede" stroke-width="1.3"/><path d="M24 672.6L27.2 669.8V675.4ZM31.6 680.4L28.8 677.2H34.4Z" fill="#dedede"/>
<rect x="13.5" y="726.8" width="16" height="11.6" fill="none" stroke="#dedede" stroke-width="1.2"/><circle cx="21.5" cy="732.6" r="3.9" fill="none" stroke="#dedede" stroke-width="1.35" stroke-linecap="round" stroke-dasharray="0.01 2.04"/>
<rect x="13.5" y="755.7" width="11" height="8.8" fill="none" stroke="#dedede" stroke-width="1.1"/><rect x="18.8" y="752.6" width="10.8" height="8.8" fill="#535353" stroke="#dedede" stroke-width="1.1"/><path d="M18.8 753.2H29.6" stroke="#dedede" stroke-width="1.8"/>
<path d="M34.2 764.0V767.2H31.0Z" fill="#b4b4b4"/>
<path d="M62 108h1v2h-1zM68 108h1v2h-1zM75 108h1v2h-1zM82 93h1v17h-1zM88 108h1v2h-1zM95 108h1v2h-1zM102 108h1v2h-1zM108 108h1v2h-1zM115 93h1v17h-1zM122 108h1v2h-1zM128 108h1v2h-1zM135 108h1v2h-1zM142 108h1v2h-1zM148 93h1v17h-1zM155 108h1v2h-1zM162 108h1v2h-1zM168 108h1v2h-1zM175 108h1v2h-1zM182 93h1v17h-1zM188 108h1v2h-1zM195 108h1v2h-1zM202 108h1v2h-1zM208 108h1v2h-1zM215 93h1v17h-1zM222 108h1v2h-1zM228 108h1v2h-1zM235 108h1v2h-1zM242 108h1v2h-1zM248 93h1v17h-1zM255 108h1v2h-1zM262 108h1v2h-1zM268 108h1v2h-1zM275 108h1v2h-1zM282 93h1v17h-1zM288 108h1v2h-1zM295 108h1v2h-1zM302 108h1v2h-1zM308 108h1v2h-1zM315 93h1v17h-1zM322 108h1v2h-1zM328 108h1v2h-1zM335 108h1v2h-1zM342 108h1v2h-1zM348 93h1v17h-1zM355 108h1v2h-1zM362 108h1v2h-1zM368 108h1v2h-1zM375 108h1v2h-1zM382 93h1v17h-1zM388 108h1v2h-1zM395 108h1v2h-1zM402 108h1v2h-1zM408 108h1v2h-1zM415 93h1v17h-1zM422 108h1v2h-1zM428 108h1v2h-1zM435 108h1v2h-1zM442 108h1v2h-1zM448 93h1v17h-1zM455 108h1v2h-1zM462 108h1v2h-1zM468 108h1v2h-1zM475 108h1v2h-1zM482 93h1v17h-1zM488 108h1v2h-1zM495 108h1v2h-1zM502 108h1v2h-1zM508 108h1v2h-1zM515 93h1v17h-1zM522 108h1v2h-1zM528 108h1v2h-1zM535 108h1v2h-1zM542 108h1v2h-1zM548 93h1v17h-1zM555 108h1v2h-1zM562 108h1v2h-1zM568 108h1v2h-1zM575 108h1v2h-1zM582 93h1v17h-1zM588 108h1v2h-1zM595 108h1v2h-1zM602 108h1v2h-1zM608 108h1v2h-1zM615 93h1v17h-1zM622 108h1v2h-1zM628 108h1v2h-1zM635 108h1v2h-1zM642 108h1v2h-1zM648 93h1v17h-1zM655 108h1v2h-1zM662 108h1v2h-1zM668 108h1v2h-1zM675 108h1v2h-1zM682 93h1v17h-1zM688 108h1v2h-1zM695 108h1v2h-1zM702 108h1v2h-1zM708 108h1v2h-1zM715 93h1v17h-1zM722 108h1v2h-1zM728 108h1v2h-1zM735 108h1v2h-1zM742 108h1v2h-1zM748 93h1v17h-1zM755 108h1v2h-1zM762 108h1v2h-1zM768 108h1v2h-1zM775 108h1v2h-1zM782 93h1v17h-1zM788 108h1v2h-1zM795 108h1v2h-1zM802 108h1v2h-1zM808 108h1v2h-1zM815 93h1v17h-1zM822 108h1v2h-1zM828 108h1v2h-1zM835 108h1v2h-1zM842 108h1v2h-1zM848 93h1v17h-1zM855 108h1v2h-1zM862 108h1v2h-1zM868 108h1v2h-1zM875 108h1v2h-1zM882 93h1v17h-1zM888 108h1v2h-1zM895 108h1v2h-1zM902 108h1v2h-1zM908 108h1v2h-1zM915 93h1v17h-1zM922 108h1v2h-1zM928 108h1v2h-1zM935 108h1v2h-1zM942 108h1v2h-1zM58 114h2v1h-2zM58 120h2v1h-2zM43 127h17v1h-17zM58 134h2v1h-2zM58 140h2v1h-2zM58 147h2v1h-2zM58 154h2v1h-2zM43 160h17v1h-17zM58 167h2v1h-2zM58 174h2v1h-2zM58 180h2v1h-2zM58 187h2v1h-2zM43 194h17v1h-17zM58 200h2v1h-2zM58 207h2v1h-2zM58 214h2v1h-2zM58 220h2v1h-2zM43 227h17v1h-17zM58 234h2v1h-2zM58 240h2v1h-2zM58 247h2v1h-2zM58 254h2v1h-2zM43 260h17v1h-17zM58 267h2v1h-2zM58 274h2v1h-2zM58 280h2v1h-2zM58 287h2v1h-2zM43 294h17v1h-17zM58 300h2v1h-2zM58 307h2v1h-2zM58 314h2v1h-2zM58 320h2v1h-2zM43 327h17v1h-17zM58 334h2v1h-2zM58 340h2v1h-2zM58 347h2v1h-2zM58 354h2v1h-2zM43 360h17v1h-17zM58 367h2v1h-2zM58 374h2v1h-2zM58 380h2v1h-2zM58 387h2v1h-2zM43 394h17v1h-17zM58 400h2v1h-2zM58 407h2v1h-2zM58 414h2v1h-2zM58 420h2v1h-2zM43 427h17v1h-17zM58 434h2v1h-2zM58 440h2v1h-2zM58 447h2v1h-2zM58 454h2v1h-2zM43 460h17v1h-17zM58 467h2v1h-2zM58 474h2v1h-2zM58 480h2v1h-2zM58 487h2v1h-2zM43 494h17v1h-17zM58 500h2v1h-2zM58 507h2v1h-2zM58 514h2v1h-2zM58 520h2v1h-2zM43 527h17v1h-17zM58 534h2v1h-2zM58 540h2v1h-2zM58 547h2v1h-2zM58 554h2v1h-2zM43 560h17v1h-17zM58 567h2v1h-2zM58 574h2v1h-2zM58 580h2v1h-2zM58 587h2v1h-2zM43 594h17v1h-17zM58 600h2v1h-2zM58 607h2v1h-2zM58 614h2v1h-2zM58 620h2v1h-2zM43 627h17v1h-17zM58 634h2v1h-2zM58 640h2v1h-2zM58 647h2v1h-2zM58 654h2v1h-2zM43 660h17v1h-17zM58 667h2v1h-2zM58 674h2v1h-2zM58 680h2v1h-2zM58 687h2v1h-2zM43 694h17v1h-17zM58 700h2v1h-2zM58 707h2v1h-2zM58 714h2v1h-2zM58 720h2v1h-2zM43 727h17v1h-17zM58 734h2v1h-2zM58 740h2v1h-2zM58 747h2v1h-2zM58 754h2v1h-2zM43 760h17v1h-17zM58 767h2v1h-2zM58 774h2v1h-2zM58 780h2v1h-2zM58 787h2v1h-2zM43 794h17v1h-17zM58 800h2v1h-2zM58 807h2v1h-2zM58 814h2v1h-2zM58 820h2v1h-2zM43 827h17v1h-17zM58 834h2v1h-2zM58 840h2v1h-2zM58 847h2v1h-2zM58 854h2v1h-2zM43 860h17v1h-17zM58 867h2v1h-2zM58 874h2v1h-2zM58 880h2v1h-2zM58 887h2v1h-2zM43 894h17v1h-17zM58 900h2v1h-2z" fill="#747474" shape-rendering="crispEdges"/>
<defs><clipPath id="rclip"><path d="M60 93H944V110H60ZM43 110H60V905H43Z"/></clipPath></defs>
<g clip-path="url(#rclip)"><text x="50.6" y="106.2" font-size="10" fill="#a0a0a0" textLength="13.9" lengthAdjust="spacingAndGlyphs">400</text><text x="84.6" y="106.2" font-size="10" fill="#a0a0a0" textLength="13.9" lengthAdjust="spacingAndGlyphs">300</text><text x="117.6" y="106.2" font-size="10" fill="#a0a0a0" textLength="13.9" lengthAdjust="spacingAndGlyphs">200</text><text x="150.6" y="106.2" font-size="10" fill="#a0a0a0" textLength="13.9" lengthAdjust="spacingAndGlyphs">100</text><text x="184.6" y="106.2" font-size="10" fill="#a0a0a0" textLength="4.6" lengthAdjust="spacingAndGlyphs">0</text><text x="217.6" y="106.2" font-size="10" fill="#a0a0a0" textLength="13.9" lengthAdjust="spacingAndGlyphs">100</text><text x="250.6" y="106.2" font-size="10" fill="#a0a0a0" textLength="13.9" lengthAdjust="spacingAndGlyphs">200</text><text x="284.6" y="106.2" font-size="10" fill="#a0a0a0" textLength="13.9" lengthAdjust="spacingAndGlyphs">300</text><text x="317.6" y="106.2" font-size="10" fill="#a0a0a0" textLength="13.9" lengthAdjust="spacingAndGlyphs">400</text><text x="350.6" y="106.2" font-size="10" fill="#a0a0a0" textLength="13.9" lengthAdjust="spacingAndGlyphs">500</text><text x="384.6" y="106.2" font-size="10" fill="#a0a0a0" textLength="13.9" lengthAdjust="spacingAndGlyphs">600</text><text x="417.6" y="106.2" font-size="10" fill="#a0a0a0" textLength="13.9" lengthAdjust="spacingAndGlyphs">700</text><text x="450.6" y="106.2" font-size="10" fill="#a0a0a0" textLength="13.9" lengthAdjust="spacingAndGlyphs">800</text><text x="484.6" y="106.2" font-size="10" fill="#a0a0a0" textLength="13.9" lengthAdjust="spacingAndGlyphs">900</text><text x="517.6" y="106.2" font-size="10" fill="#a0a0a0" textLength="18.5" lengthAdjust="spacingAndGlyphs">1000</text><text x="550.6" y="106.2" font-size="10" fill="#a0a0a0" textLength="18.5" lengthAdjust="spacingAndGlyphs">1100</text><text x="584.6" y="106.2" font-size="10" fill="#a0a0a0" textLength="18.5" lengthAdjust="spacingAndGlyphs">1200</text><text x="617.6" y="106.2" font-size="10" fill="#a0a0a0" textLength="18.5" lengthAdjust="spacingAndGlyphs">1300</text><text x="650.6" y="106.2" font-size="10" fill="#a0a0a0" textLength="18.5" lengthAdjust="spacingAndGlyphs">1400</text><text x="684.6" y="106.2" font-size="10" fill="#a0a0a0" textLength="18.5" lengthAdjust="spacingAndGlyphs">1500</text><text x="717.6" y="106.2" font-size="10" fill="#a0a0a0" textLength="18.5" lengthAdjust="spacingAndGlyphs">1600</text><text x="750.6" y="106.2" font-size="10" fill="#a0a0a0" textLength="18.5" lengthAdjust="spacingAndGlyphs">1700</text><text x="784.6" y="106.2" font-size="10" fill="#a0a0a0" textLength="18.5" lengthAdjust="spacingAndGlyphs">1800</text><text x="817.6" y="106.2" font-size="10" fill="#a0a0a0" textLength="18.5" lengthAdjust="spacingAndGlyphs">1900</text><text x="850.6" y="106.2" font-size="10" fill="#a0a0a0" textLength="18.5" lengthAdjust="spacingAndGlyphs">2000</text><text x="884.6" y="106.2" font-size="10" fill="#a0a0a0" textLength="18.5" lengthAdjust="spacingAndGlyphs">2100</text><text x="917.6" y="106.2" font-size="10" fill="#a0a0a0" textLength="18.5" lengthAdjust="spacingAndGlyphs">2200</text><text x="49.2" y="69.1" font-size="9.4" fill="#a0a0a0" textLength="4.4" lengthAdjust="spacingAndGlyphs">8</text><text x="49.2" y="76.8" font-size="9.4" fill="#a0a0a0" textLength="4.4" lengthAdjust="spacingAndGlyphs">0</text><text x="49.2" y="84.5" font-size="9.4" fill="#a0a0a0" textLength="4.4" lengthAdjust="spacingAndGlyphs">0</text><text x="49.2" y="103.1" font-size="9.4" fill="#a0a0a0" textLength="4.4" lengthAdjust="spacingAndGlyphs">7</text><text x="49.2" y="110.8" font-size="9.4" fill="#a0a0a0" textLength="4.4" lengthAdjust="spacingAndGlyphs">0</text><text x="49.2" y="118.5" font-size="9.4" fill="#a0a0a0" textLength="4.4" lengthAdjust="spacingAndGlyphs">0</text><text x="49.2" y="136.1" font-size="9.4" fill="#a0a0a0" textLength="4.4" lengthAdjust="spacingAndGlyphs">6</text><text x="49.2" y="143.8" font-size="9.4" fill="#a0a0a0" textLength="4.4" lengthAdjust="spacingAndGlyphs">0</text><text x="49.2" y="151.5" font-size="9.4" fill="#a0a0a0" textLength="4.4" lengthAdjust="spacingAndGlyphs">0</text><text x="49.2" y="169.1" font-size="9.4" fill="#a0a0a0" textLength="4.4" lengthAdjust="spacingAndGlyphs">5</text><text x="49.2" y="176.8" font-size="9.4" fill="#a0a0a0" textLength="4.4" lengthAdjust="spacingAndGlyphs">0</text><text x="49.2" y="184.5" font-size="9.4" fill="#a0a0a0" textLength="4.4" lengthAdjust="spacingAndGlyphs">0</text><text x="49.2" y="203.1" font-size="9.4" fill="#a0a0a0" textLength="4.4" lengthAdjust="spacingAndGlyphs">4</text><text x="49.2" y="210.8" font-size="9.4" fill="#a0a0a0" textLength="4.4" lengthAdjust="spacingAndGlyphs">0</text><text x="49.2" y="218.5" font-size="9.4" fill="#a0a0a0" textLength="4.4" lengthAdjust="spacingAndGlyphs">0</text><text x="49.2" y="236.1" font-size="9.4" fill="#a0a0a0" textLength="4.4" lengthAdjust="spacingAndGlyphs">3</text><text x="49.2" y="243.8" font-size="9.4" fill="#a0a0a0" textLength="4.4" lengthAdjust="spacingAndGlyphs">0</text><text x="49.2" y="251.5" font-size="9.4" fill="#a0a0a0" textLength="4.4" lengthAdjust="spacingAndGlyphs">0</text><text x="49.2" y="269.1" font-size="9.4" fill="#a0a0a0" textLength="4.4" lengthAdjust="spacingAndGlyphs">2</text><text x="49.2" y="276.8" font-size="9.4" fill="#a0a0a0" textLength="4.4" lengthAdjust="spacingAndGlyphs">0</text><text x="49.2" y="284.5" font-size="9.4" fill="#a0a0a0" textLength="4.4" lengthAdjust="spacingAndGlyphs">0</text><text x="49.2" y="303.1" font-size="9.4" fill="#a0a0a0" textLength="4.4" lengthAdjust="spacingAndGlyphs">1</text><text x="49.2" y="310.8" font-size="9.4" fill="#a0a0a0" textLength="4.4" lengthAdjust="spacingAndGlyphs">0</text><text x="49.2" y="318.5" font-size="9.4" fill="#a0a0a0" textLength="4.4" lengthAdjust="spacingAndGlyphs">0</text><text x="49.2" y="336.1" font-size="9.4" fill="#a0a0a0" textLength="4.4" lengthAdjust="spacingAndGlyphs">0</text><text x="49.2" y="369.1" font-size="9.4" fill="#a0a0a0" textLength="4.4" lengthAdjust="spacingAndGlyphs">1</text><text x="49.2" y="376.8" font-size="9.4" fill="#a0a0a0" textLength="4.4" lengthAdjust="spacingAndGlyphs">0</text><text x="49.2" y="384.5" font-size="9.4" fill="#a0a0a0" textLength="4.4" lengthAdjust="spacingAndGlyphs">0</text><text x="49.2" y="403.1" font-size="9.4" fill="#a0a0a0" textLength="4.4" lengthAdjust="spacingAndGlyphs">2</text><text x="49.2" y="410.8" font-size="9.4" fill="#a0a0a0" textLength="4.4" lengthAdjust="spacingAndGlyphs">0</text><text x="49.2" y="418.5" font-size="9.4" fill="#a0a0a0" textLength="4.4" lengthAdjust="spacingAndGlyphs">0</text><text x="49.2" y="436.1" font-size="9.4" fill="#a0a0a0" textLength="4.4" lengthAdjust="spacingAndGlyphs">3</text><text x="49.2" y="443.8" font-size="9.4" fill="#a0a0a0" textLength="4.4" lengthAdjust="spacingAndGlyphs">0</text><text x="49.2" y="451.5" font-size="9.4" fill="#a0a0a0" textLength="4.4" lengthAdjust="spacingAndGlyphs">0</text><text x="49.2" y="469.1" font-size="9.4" fill="#a0a0a0" textLength="4.4" lengthAdjust="spacingAndGlyphs">4</text><text x="49.2" y="476.8" font-size="9.4" fill="#a0a0a0" textLength="4.4" lengthAdjust="spacingAndGlyphs">0</text><text x="49.2" y="484.5" font-size="9.4" fill="#a0a0a0" textLength="4.4" lengthAdjust="spacingAndGlyphs">0</text><text x="49.2" y="503.1" font-size="9.4" fill="#a0a0a0" textLength="4.4" lengthAdjust="spacingAndGlyphs">5</text><text x="49.2" y="510.8" font-size="9.4" fill="#a0a0a0" textLength="4.4" lengthAdjust="spacingAndGlyphs">0</text><text x="49.2" y="518.5" font-size="9.4" fill="#a0a0a0" textLength="4.4" lengthAdjust="spacingAndGlyphs">0</text><text x="49.2" y="536.1" font-size="9.4" fill="#a0a0a0" textLength="4.4" lengthAdjust="spacingAndGlyphs">6</text><text x="49.2" y="543.8" font-size="9.4" fill="#a0a0a0" textLength="4.4" lengthAdjust="spacingAndGlyphs">0</text><text x="49.2" y="551.5" font-size="9.4" fill="#a0a0a0" textLength="4.4" lengthAdjust="spacingAndGlyphs">0</text><text x="49.2" y="569.1" font-size="9.4" fill="#a0a0a0" textLength="4.4" lengthAdjust="spacingAndGlyphs">7</text><text x="49.2" y="576.8" font-size="9.4" fill="#a0a0a0" textLength="4.4" lengthAdjust="spacingAndGlyphs">0</text><text x="49.2" y="584.5" font-size="9.4" fill="#a0a0a0" textLength="4.4" lengthAdjust="spacingAndGlyphs">0</text><text x="49.2" y="603.1" font-size="9.4" fill="#a0a0a0" textLength="4.4" lengthAdjust="spacingAndGlyphs">8</text><text x="49.2" y="610.8" font-size="9.4" fill="#a0a0a0" textLength="4.4" lengthAdjust="spacingAndGlyphs">0</text><text x="49.2" y="618.5" font-size="9.4" fill="#a0a0a0" textLength="4.4" lengthAdjust="spacingAndGlyphs">0</text><text x="49.2" y="636.1" font-size="9.4" fill="#a0a0a0" textLength="4.4" lengthAdjust="spacingAndGlyphs">9</text><text x="49.2" y="643.8" font-size="9.4" fill="#a0a0a0" textLength="4.4" lengthAdjust="spacingAndGlyphs">0</text><text x="49.2" y="651.5" font-size="9.4" fill="#a0a0a0" textLength="4.4" lengthAdjust="spacingAndGlyphs">0</text><text x="49.2" y="669.1" font-size="9.4" fill="#a0a0a0" textLength="4.4" lengthAdjust="spacingAndGlyphs">1</text><text x="49.2" y="676.8" font-size="9.4" fill="#a0a0a0" textLength="4.4" lengthAdjust="spacingAndGlyphs">0</text><text x="49.2" y="684.5" font-size="9.4" fill="#a0a0a0" textLength="4.4" lengthAdjust="spacingAndGlyphs">0</text><text x="49.2" y="692.2" font-size="9.4" fill="#a0a0a0" textLength="4.4" lengthAdjust="spacingAndGlyphs">0</text><text x="49.2" y="703.1" font-size="9.4" fill="#a0a0a0" textLength="4.4" lengthAdjust="spacingAndGlyphs">1</text><text x="49.2" y="710.8" font-size="9.4" fill="#a0a0a0" textLength="4.4" lengthAdjust="spacingAndGlyphs">1</text><text x="49.2" y="718.5" font-size="9.4" fill="#a0a0a0" textLength="4.4" lengthAdjust="spacingAndGlyphs">0</text><text x="49.2" y="726.2" font-size="9.4" fill="#a0a0a0" textLength="4.4" lengthAdjust="spacingAndGlyphs">0</text><text x="49.2" y="736.1" font-size="9.4" fill="#a0a0a0" textLength="4.4" lengthAdjust="spacingAndGlyphs">1</text><text x="49.2" y="743.8" font-size="9.4" fill="#a0a0a0" textLength="4.4" lengthAdjust="spacingAndGlyphs">2</text><text x="49.2" y="751.5" font-size="9.4" fill="#a0a0a0" textLength="4.4" lengthAdjust="spacingAndGlyphs">0</text><text x="49.2" y="759.2" font-size="9.4" fill="#a0a0a0" textLength="4.4" lengthAdjust="spacingAndGlyphs">0</text><text x="49.2" y="769.1" font-size="9.4" fill="#a0a0a0" textLength="4.4" lengthAdjust="spacingAndGlyphs">1</text><text x="49.2" y="776.8" font-size="9.4" fill="#a0a0a0" textLength="4.4" lengthAdjust="spacingAndGlyphs">3</text><text x="49.2" y="784.5" font-size="9.4" fill="#a0a0a0" textLength="4.4" lengthAdjust="spacingAndGlyphs">0</text><text x="49.2" y="792.2" font-size="9.4" fill="#a0a0a0" textLength="4.4" lengthAdjust="spacingAndGlyphs">0</text><text x="49.2" y="803.1" font-size="9.4" fill="#a0a0a0" textLength="4.4" lengthAdjust="spacingAndGlyphs">1</text><text x="49.2" y="810.8" font-size="9.4" fill="#a0a0a0" textLength="4.4" lengthAdjust="spacingAndGlyphs">4</text><text x="49.2" y="818.5" font-size="9.4" fill="#a0a0a0" textLength="4.4" lengthAdjust="spacingAndGlyphs">0</text><text x="49.2" y="826.2" font-size="9.4" fill="#a0a0a0" textLength="4.4" lengthAdjust="spacingAndGlyphs">0</text><text x="49.2" y="836.1" font-size="9.4" fill="#a0a0a0" textLength="4.4" lengthAdjust="spacingAndGlyphs">1</text><text x="49.2" y="843.8" font-size="9.4" fill="#a0a0a0" textLength="4.4" lengthAdjust="spacingAndGlyphs">5</text><text x="49.2" y="851.5" font-size="9.4" fill="#a0a0a0" textLength="4.4" lengthAdjust="spacingAndGlyphs">0</text><text x="49.2" y="859.2" font-size="9.4" fill="#a0a0a0" textLength="4.4" lengthAdjust="spacingAndGlyphs">0</text><text x="49.2" y="869.1" font-size="9.4" fill="#a0a0a0" textLength="4.4" lengthAdjust="spacingAndGlyphs">1</text><text x="49.2" y="876.8" font-size="9.4" fill="#a0a0a0" textLength="4.4" lengthAdjust="spacingAndGlyphs">6</text><text x="49.2" y="884.5" font-size="9.4" fill="#a0a0a0" textLength="4.4" lengthAdjust="spacingAndGlyphs">0</text><text x="49.2" y="892.2" font-size="9.4" fill="#a0a0a0" textLength="4.4" lengthAdjust="spacingAndGlyphs">0</text><text x="49.2" y="903.1" font-size="9.4" fill="#a0a0a0" textLength="4.4" lengthAdjust="spacingAndGlyphs">1</text><text x="49.2" y="910.8" font-size="9.4" fill="#a0a0a0" textLength="4.4" lengthAdjust="spacingAndGlyphs">7</text><text x="49.2" y="918.5" font-size="9.4" fill="#a0a0a0" textLength="4.4" lengthAdjust="spacingAndGlyphs">0</text><text x="49.2" y="926.2" font-size="9.4" fill="#a0a0a0" textLength="4.4" lengthAdjust="spacingAndGlyphs">0</text><text x="49.2" y="936.1" font-size="9.4" fill="#a0a0a0" textLength="4.4" lengthAdjust="spacingAndGlyphs">1</text><text x="49.2" y="943.8" font-size="9.4" fill="#a0a0a0" textLength="4.4" lengthAdjust="spacingAndGlyphs">8</text><text x="49.2" y="951.5" font-size="9.4" fill="#a0a0a0" textLength="4.4" lengthAdjust="spacingAndGlyphs">0</text><text x="49.2" y="959.2" font-size="9.4" fill="#a0a0a0" textLength="4.4" lengthAdjust="spacingAndGlyphs">0</text></g>
<path d="M44 104.5H59M54.5 94V110" stroke="#777" stroke-width="1" stroke-dasharray="1 1" fill="none" shape-rendering="crispEdges"/>
<path d="M239.8 75.4L245.6 81.2M245.6 75.4L239.8 81.2" stroke="#b8b8b8" stroke-width="1.1"/>
<path d="M264.8 909.6L267.8 913.6L264.8 917.6" stroke="#d0d0d0" stroke-width="1.2" fill="none"/>
<path d="M286.2 910.4L283.4 913.8L286.2 917.2" stroke="#9a9a9a" stroke-width="1.1" fill="none"/>
<path d="M932.6 910.6L935.6 914.2L932.6 917.8" stroke="#9a9a9a" stroke-width="1.1" fill="none"/>
<path d="M949.5 105L953 101.4L956.5 105" stroke="#a4a4a4" stroke-width="1.2" fill="none"/>
<path d="M949.3 893.4L952.7 896.8L956.1 893.4" stroke="#a4a4a4" stroke-width="1.2" fill="none"/>
<path d="M989.8 67.4L987.6 69.7L989.8 72M993.8 67.4L991.6 69.7L993.8 72" stroke="#e4e4e4" stroke-width="1.3" fill="none"/>
<path d="M972 81H992" stroke="#434343" stroke-width="4" stroke-dasharray="1 1" shape-rendering="crispEdges"/>
<path d="M972 150H992" stroke="#434343" stroke-width="4" stroke-dasharray="1 1" shape-rendering="crispEdges"/>
<rect x="975.7" y="90.9" width="3.8" height="3.8" fill="none" stroke="#dedede" stroke-width="1"/><rect x="975.7" y="96.9" width="3.8" height="3.8" fill="none" stroke="#dedede" stroke-width="1"/><rect x="975.2" y="102.4" width="4.8" height="4.8" fill="#dedede"/><path d="M983 104.6C987.6 102.6 989.2 98.6 986.2 94.6" fill="none" stroke="#dedede" stroke-width="1.7"/><path d="M983.2 93.6L988.2 91.4L987.6 96.8Z" fill="#dedede"/>
<path d="M976.6 120.6H988A1.2 1.2 0 0 1 989.2 121.8V128A1.2 1.2 0 0 1 988 129.2H981.6L977.8 132.8V129.2H976.6A1.2 1.2 0 0 1 975.4 128V121.8A1.2 1.2 0 0 1 976.6 120.6Z" fill="#dedede"/>
<path d="M975.6 173.2L980.4 162H981.8L986.6 173.2H985L983.7 170H978.5L977.2 173.2ZM979.1 168.6H983.1L981.1 163.6Z" fill="#dedede"/><path d="M988.5 160V175.8" stroke="#dedede" stroke-width="1.1"/>
<path d="M983.2 188.8H987.4V190H986.2V203H984.9V190H983.4V203H982.1V196.4C978.8 196.4 976 195.2 976 192.6C976 190 978.6 188.8 983.2 188.8Z" fill="#dedede"/>
<path d="M1275 67.4L1277.2 69.7L1275 72M1279 67.4L1281.2 69.7L1279 72" stroke="#e4e4e4" stroke-width="1.3" fill="none"/>
<path d="M1272.5 86h10M1272.5 88h10M1272.5 90h10M1272.5 92h10" stroke="#d0d0d0" stroke-width="1" shape-rendering="crispEdges"/>
<circle cx="1049.6" cy="196.8" r="4.2" fill="none" stroke="#e8e8e8" stroke-width="1.1" clip-path="url(#cfclip)"/><defs><clipPath id="cfclip"><rect x="1048" y="111" width="188" height="187"/></clipPath></defs>
<path d="M1245.4 295L1250 297.5L1245.4 300Z" fill="#3a3a3a" stroke="#3a3a3a" stroke-width="3.6" stroke-linejoin="round"/><path d="M1245.4 295L1250 297.5L1245.4 300Z" fill="#e8e8e8" stroke="#e8e8e8" stroke-width="2" stroke-linejoin="round"/>
<path d="M1272.5 332h10M1272.5 334h10M1272.5 336h10M1272.5 338h10" stroke="#d0d0d0" stroke-width="1" shape-rendering="crispEdges"/>
<path d="M1020.6 360.6H1026.4L1029.6 363.8V373.4H1020.6Z" fill="none" stroke="#dedede" stroke-width="1.2"/><path d="M1026.2 360.8V364H1029.4" fill="none" stroke="#dedede" stroke-width="1"/>
<path d="M1010.4 395.6L1014.2 399.4L1018 395.6" stroke="#c8c8c8" stroke-width="1.1" fill="none"/>
<rect x="1022.9" y="433.8" width="6.2" height="7.6" rx="3.1" fill="none" stroke="#d2d2d2" stroke-width="1.6"/><rect x="1022.9" y="439.6" width="6.2" height="7.6" rx="3.1" fill="none" stroke="#d2d2d2" stroke-width="1.6"/><path d="M1026 437.4V443.6" stroke="#dcdcdc" stroke-width="2"/>
<rect x="1076.2" y="481.4" width="13.6" height="15.4" fill="none" stroke="#dedede" stroke-width="1.1"/><circle cx="1083" cy="486.2" r="1.9" fill="#dedede"/><path d="M1079.8 496.4V491.4C1079.8 489.6 1081 488.8 1083 488.8C1085 488.8 1086.2 489.6 1086.2 491.4V496.4Z" fill="#dedede"/>
<rect x="1101.6" y="483" width="15.4" height="12" fill="none" stroke="#dedede" stroke-width="1.1"/><circle cx="1109.3" cy="487" r="1.8" fill="#dedede"/><path d="M1105.6 494.6V491.4C1105.6 489.8 1107 489.2 1109.3 489.2C1111.6 489.2 1113 489.8 1113 491.4V494.6Z" fill="#dedede"/>
<path d="M1276.6 396.2L1280 393L1283.4 396.2" stroke="#9a9a9a" stroke-width="1.1" fill="none"/>
<path d="M1276.6 530.4L1280 533.6L1283.4 530.4" stroke="#9a9a9a" stroke-width="1.1" fill="none"/>
<path d="M1272.5 580h10M1272.5 582h10M1272.5 584h10M1272.5 586h10" stroke="#d0d0d0" stroke-width="1" shape-rendering="crispEdges"/>
<circle cx="1017.9" cy="616.2" r="3.3" fill="none" stroke="#d0d0d0" stroke-width="1.5"/><path d="M1020.4 618.8L1023.6 622" stroke="#d0d0d0" stroke-width="1.7"/>
<path d="M1114.8 616.6L1118.0 620.2L1121.2 616.6" stroke="#6e6e6e" stroke-width="1.1" fill="none"/>
<g transform="translate(0 0.6)">
<rect x="1146.4" y="610.8" width="11.2" height="9.6" fill="none" stroke="#b8b8b8" stroke-width="1.1"/><path d="M1147.8 619L1150.4 615.2L1152.4 617.6L1154 616L1156.2 619Z" fill="#b8b8b8"/>
<circle cx="1176.5" cy="615.8" r="5.1" fill="none" stroke="#b8b8b8" stroke-width="1.2"/><path d="M1180.1 612.2A5.1 5.1 0 0 1 1172.9 619.4Z" fill="#b8b8b8"/>
<path d="M1196.2 611.2H1205.8V614.2H1204.8L1204.3 612.6H1202V619.6L1203.5 620V621H1198.5V620L1200 619.6V612.6H1197.7L1197.2 614.2H1196.2Z" fill="#b8b8b8"/>
<rect x="1220.4" y="611.6" width="8.6" height="8.8" fill="none" stroke="#b8b8b8" stroke-width="1.1"/><path d="M1219.2 610.4h2.4v2.4h-2.4zM1227.8 610.4h2.4v2.4h-2.4zM1219.2 619.2h2.4v2.4h-2.4zM1227.8 619.2h2.4v2.4h-2.4z" fill="#535353" stroke="#b8b8b8" stroke-width=".9"/>
<path d="M1246.4 615.4V610.8H1250.8L1253.6 613.6V622H1250.6" fill="none" stroke="#b8b8b8" stroke-width="1.1"/><path d="M1250.6 611V613.8H1253.4" fill="none" stroke="#b8b8b8" stroke-width="1"/><rect x="1243.9" y="616" width="6" height="6.2" fill="#b8b8b8"/>
</g>
<circle cx="1280.1" cy="612" r="4" fill="#a4a4a4"/>
<path d="M1151.2 645.8L1154.4 649.4L1157.6 645.8" stroke="#6e6e6e" stroke-width="1.1" fill="none"/>
<path d="M1273.2 643.4L1276.4 647.0L1279.6 643.4" stroke="#6e6e6e" stroke-width="1.1" fill="none"/>
<rect x="1050.4" y="668.6" width="10.4" height="10.4" fill="none" stroke="#bcbcbc" stroke-width="1"/><path d="M1050.9 669.1h3.1v3.1h-3.1zM1057.1 669.1h3.2v3.1h-3.2zM1054 672.2h3.1v3.1h-3.1zM1050.9 675.3h3.1v3.2h-3.1zM1057.1 675.3h3.2v3.2h-3.2z" fill="#bcbcbc"/>
<g transform="translate(1071.6 667.4) scale(0.82)" fill="#bcbcbc"><path d="M15.3 0.2C16.1 0.8 15.7 1.9 15.1 2.8L9.9 11L7 9L12.9 1.1C13.5 0.3 14.5 -0.4 15.3 0.2Z"/><path d="M6.3 9.7L9.2 11.7C9.4 14.1 7.2 15.7 4.6 16C3 16.2 1.4 16.2 0 16.1C2.2 15 2 13.2 2.8 11.6C3.5 10.2 4.9 9.4 6.3 9.7Z"/></g>
<path d="M1094.4 674H1104.8M1099.6 668.8V679.2" stroke="#bcbcbc" stroke-width="1.1"/><path d="M1099.6 667.4L1101.8 670H1097.4ZM1099.6 680.6L1101.8 678H1097.4ZM1093 674L1095.6 671.8V676.2ZM1106.2 674L1103.6 671.8V676.2Z" fill="#bcbcbc"/>
<path d="M1118.6 668V680M1115.6 671H1127.6M1125.6 671V677.4H1118.6M1125.6 679.2V680.4M1127.2 677.4H1128.6" fill="none" stroke="#bcbcbc" stroke-width="1.1"/><path d="M1122 671L1125.6 674.6" stroke="#bcbcbc" stroke-width="1" stroke-dasharray="1 1"/>
<rect x="1139.6" y="673.2" width="9.4" height="7.2" rx=".8" fill="#bcbcbc"/><path d="M1141.6 673.4V671A2.7 2.7 0 0 1 1147 671V673.4" fill="none" stroke="#bcbcbc" stroke-width="1.3"/><circle cx="1144.3" cy="676.6" r="1" fill="#535353"/>
<path d="M1273.2 672.4L1276.4 676.0L1279.6 672.4" stroke="#6e6e6e" stroke-width="1.1" fill="none"/>
<path d="M1011.6 705.2C1014 701.4 1016.4 700.2 1018.5 700.2C1020.6 700.2 1023 701.4 1025.4 705.2C1023 709 1020.6 710.2 1018.5 710.2C1016.4 710.2 1014 709 1011.6 705.2Z" fill="#f0f0f0"/><circle cx="1018.6" cy="705.2" r="2.8" fill="#3c3c3c"/><circle cx="1017.8" cy="704.4" r="0.9" fill="#c8c8c8"/>
<rect x="1246.4" y="703.2" width="9" height="7" rx=".8" fill="none" stroke="#e8e8e8" stroke-width="1.2"/><path d="M1248.4 703V700.8A2.5 2.5 0 0 1 1253.4 700.8V703" fill="none" stroke="#e8e8e8" stroke-width="1.2"/><circle cx="1250.9" cy="706.7" r=".9" fill="#e8e8e8"/>
<rect x="1086.4" y="905.2" width="7.6" height="6.4" rx="3.2" fill="none" stroke="#858585" stroke-width="1.3"/><rect x="1091.4" y="905.2" width="7.6" height="6.4" rx="3.2" fill="none" stroke="#858585" stroke-width="1.3"/><path d="M1090 908.4H1095.4" stroke="#858585" stroke-width="1.3"/>
<path d="M1124.8 914.4H1127.6L1126.2 915.8Z" fill="#6e6e6e"/>
<rect x="1140" y="902.8" width="13" height="10.4" fill="#dedede"/><circle cx="1146.5" cy="908" r="3" fill="#535353"/>
<circle cx="1174.2" cy="908.4" r="5.2" fill="none" stroke="#dedede" stroke-width="1.2"/><path d="M1177.9 904.7A5.2 5.2 0 0 1 1170.5 912.1Z" fill="#dedede"/><path d="M1178.8 914.4H1182L1180.4 916Z" fill="#dedede"/>
<path d="M1194.8 903H1200L1201 904.4H1207.2V913H1194.8Z" fill="#dedede"/>
<rect x="1223.2" y="903" width="10.2" height="10.4" fill="none" stroke="#dedede" stroke-width="1.2"/><path d="M1228.3 905.4V911M1225.5 908.2H1231.1" stroke="#dedede" stroke-width="1.2"/>
<path d="M1249.4 905.2H1259M1252.2 905V903.4H1256.2V905M1250.4 905.4L1251 914H1257.4L1258 905.4M1252.8 907V912.4M1254.2 907V912.4M1255.6 907V912.4" fill="none" stroke="#858585" stroke-width="1"/>
</svg>
<svg id="labels" width="1292" height="928" viewBox="0 0 1292 928">
<text x="9.5" y="16.5" font-size="9.5" fill="#31a8ff" textLength="11" lengthAdjust="spacingAndGlyphs" font-weight="bold">Ps</text>
<text x="36.6" y="18.4" font-size="13.2" fill="#ececec" textLength="47.3" lengthAdjust="spacingAndGlyphs" style="stroke:#ececec;stroke-width:.3px">ファイル(F)</text>
<text x="96.5" y="18.4" font-size="13.2" fill="#ececec" textLength="36.6" lengthAdjust="spacingAndGlyphs" style="stroke:#ececec;stroke-width:.3px">編集(E)</text>
<text x="145.4" y="18.4" font-size="13.2" fill="#ececec" textLength="44.3" lengthAdjust="spacingAndGlyphs" style="stroke:#ececec;stroke-width:.3px">イメージ(I)</text>
<text x="202.3" y="18.4" font-size="13.2" fill="#ececec" textLength="46.6" lengthAdjust="spacingAndGlyphs" style="stroke:#ececec;stroke-width:.3px">レイヤー(L)</text>
<text x="262.2" y="18.4" font-size="13.2" fill="#ececec" textLength="37.3" lengthAdjust="spacingAndGlyphs" style="stroke:#ececec;stroke-width:.3px">書式(Y)</text>
<text x="312.1" y="18.4" font-size="13.2" fill="#ececec" textLength="61.3" lengthAdjust="spacingAndGlyphs" style="stroke:#ececec;stroke-width:.3px">選択範囲(S)</text>
<text x="385.4" y="18.4" font-size="13.2" fill="#ececec" textLength="56.2" lengthAdjust="spacingAndGlyphs" style="stroke:#ececec;stroke-width:.3px">フィルター(T)</text>
<text x="452.6" y="18.4" font-size="13.2" fill="#ececec" textLength="31.3" lengthAdjust="spacingAndGlyphs" style="stroke:#ececec;stroke-width:.3px">3D(D)</text>
<text x="495.9" y="18.4" font-size="13.2" fill="#ececec" textLength="38.9" lengthAdjust="spacingAndGlyphs" style="stroke:#ececec;stroke-width:.3px">表示(V)</text>
<text x="547.1" y="18.4" font-size="13.2" fill="#ececec" textLength="42.6" lengthAdjust="spacingAndGlyphs" style="stroke:#ececec;stroke-width:.3px">プラグイン</text>
<text x="602" y="18.4" font-size="13.2" fill="#ececec" textLength="60.3" lengthAdjust="spacingAndGlyphs" style="stroke:#ececec;stroke-width:.3px">ウィンドウ(W)</text>
<text x="675.3" y="18.4" font-size="13.2" fill="#ececec" textLength="43.6" lengthAdjust="spacingAndGlyphs" style="stroke:#ececec;stroke-width:.3px">ヘルプ(H)</text>
<text x="121" y="59" font-size="9.5" fill="#d4d4d4" textLength="10.6" lengthAdjust="spacingAndGlyphs">33</text>
<text x="200.6" y="49.4" font-size="13" fill="#dcdcdc" textLength="35.4" lengthAdjust="spacingAndGlyphs" style="stroke:#dcdcdc;stroke-width:.25px">モード :</text>
<text x="249.6" y="50.4" font-size="13" fill="#e8e8e8" textLength="22" lengthAdjust="spacingAndGlyphs" style="stroke:#e8e8e8;stroke-width:.25px">通常</text>
<text x="397.7" y="49.4" font-size="13" fill="#dcdcdc" textLength="55.2" lengthAdjust="spacingAndGlyphs" style="stroke:#dcdcdc;stroke-width:.25px">不透明度 :</text>
<text x="462.6" y="49.5" font-size="12" fill="#e8e8e8" textLength="28.4" lengthAdjust="spacingAndGlyphs">100%</text>
<text x="561.8" y="49.4" font-size="13" fill="#dcdcdc" textLength="30.4" lengthAdjust="spacingAndGlyphs" style="stroke:#dcdcdc;stroke-width:.25px">流量 :</text>
<text x="601.5" y="49.5" font-size="12" fill="#e8e8e8" textLength="28.4" lengthAdjust="spacingAndGlyphs">100%</text>
<text x="700" y="49.4" font-size="13" fill="#dcdcdc" textLength="46.3" lengthAdjust="spacingAndGlyphs" style="stroke:#dcdcdc;stroke-width:.25px">滑らかさ :</text>
<text x="755" y="49.5" font-size="12" fill="#e8e8e8" textLength="16.5" lengthAdjust="spacingAndGlyphs">0%</text>
<text x="868.8" y="50" font-size="12" fill="#e8e8e8" textLength="11" lengthAdjust="spacingAndGlyphs">0°</text>
<text x="53.7" y="82.2" font-size="13" fill="#e6e6e6" textLength="59" lengthAdjust="spacingAndGlyphs" style="stroke:#e6e6e6;stroke-width:.25px">名称未設定</text>
<text x="118.1" y="82" font-size="12" fill="#e6e6e6" textLength="113.4" lengthAdjust="spacingAndGlyphs">1 @ 33.3% (RGB/8#) *</text>
<text x="111.5" y="917" font-size="11.5" fill="#d8d8d8" textLength="128.8" lengthAdjust="spacingAndGlyphs">1920 px x 1080 px (72 ppi)</text>
<text x="1012" y="94" font-size="13" fill="#f2f2f2" textLength="23" lengthAdjust="spacingAndGlyphs" style="stroke:#f2f2f2;stroke-width:.35px">カラー</text>
<text x="1052.1" y="94" font-size="13" fill="#b4b4b4" textLength="39.2" lengthAdjust="spacingAndGlyphs" style="stroke:#b4b4b4;stroke-width:.25px">スウォッチ</text>
<text x="1110.4" y="94" font-size="13" fill="#b4b4b4" textLength="54.6" lengthAdjust="spacingAndGlyphs" style="stroke:#b4b4b4;stroke-width:.25px">グラデーション</text>
<text x="1183" y="94" font-size="13" fill="#b4b4b4" textLength="32.2" lengthAdjust="spacingAndGlyphs" style="stroke:#b4b4b4;stroke-width:.25px">パターン</text>
<text x="1011.8" y="340" font-size="13" fill="#f2f2f2" textLength="40.0" lengthAdjust="spacingAndGlyphs" style="stroke:#f2f2f2;stroke-width:.35px">プロパティ</text>
<text x="1069.5" y="340" font-size="13" fill="#b4b4b4" textLength="43.2" lengthAdjust="spacingAndGlyphs" style="stroke:#b4b4b4;stroke-width:.25px">色調補正</text>
<text x="1130.9" y="339.6" font-size="12" fill="#b4b4b4" textLength="12" lengthAdjust="spacingAndGlyphs">CC</text>
<text x="1147.1000000000001" y="340" font-size="13" fill="#b4b4b4" textLength="38.4" lengthAdjust="spacingAndGlyphs" style="stroke:#b4b4b4;stroke-width:.25px">ライブラリ</text>
<text x="1043" y="372" font-size="13" fill="#e0e0e0" textLength="51.5" lengthAdjust="spacingAndGlyphs" style="stroke:#e0e0e0;stroke-width:.25px">ドキュメント</text>
<text x="1025" y="402.6" font-size="12.5" fill="#f4f4f4" textLength="40" lengthAdjust="spacingAndGlyphs" font-weight="bold">カンバス</text>
<text x="1053.8" y="430" font-size="12" fill="#d8d8d8" textLength="10.2" lengthAdjust="spacingAndGlyphs">W</text>
<text x="1074.8" y="430" font-size="12" fill="#f0f0f0" textLength="37.9" lengthAdjust="spacingAndGlyphs">1920 px</text>
<text x="1140.7" y="430" font-size="12" fill="#d8d8d8" textLength="7" lengthAdjust="spacingAndGlyphs">X</text>
<text x="1159.8" y="430" font-size="12" fill="#727272" textLength="20.4" lengthAdjust="spacingAndGlyphs">0 px</text>
<text x="1057.3" y="459.4" font-size="12" fill="#d8d8d8" textLength="7" lengthAdjust="spacingAndGlyphs">H</text>
<text x="1074.8" y="459.4" font-size="12" fill="#f0f0f0" textLength="37.9" lengthAdjust="spacingAndGlyphs">1080 px</text>
<text x="1140.7" y="459.4" font-size="12" fill="#d8d8d8" textLength="7" lengthAdjust="spacingAndGlyphs">Y</text>
<text x="1159.8" y="459.4" font-size="12" fill="#727272" textLength="20.4" lengthAdjust="spacingAndGlyphs">0 px</text>
<text x="1071.5" y="523.6" font-size="13" fill="#dedede" textLength="35" lengthAdjust="spacingAndGlyphs" style="stroke:#dedede;stroke-width:.25px">解像度</text>
<text x="1112.4" y="522.8" font-size="12" fill="#dedede" textLength="2.4" lengthAdjust="spacingAndGlyphs">:</text>
<text x="1120" y="523.4" font-size="12" fill="#dedede" textLength="63.6" lengthAdjust="spacingAndGlyphs">72 pixel/inch</text>
<text x="1011.8" y="588" font-size="13" fill="#f2f2f2" textLength="31.6" lengthAdjust="spacingAndGlyphs" style="stroke:#f2f2f2;stroke-width:.35px">レイヤー</text>
<text x="1061" y="588" font-size="13" fill="#b4b4b4" textLength="41.8" lengthAdjust="spacingAndGlyphs" style="stroke:#b4b4b4;stroke-width:.25px">チャンネル</text>
<text x="1121.4" y="588" font-size="13" fill="#b4b4b4" textLength="16.9" lengthAdjust="spacingAndGlyphs" style="stroke:#b4b4b4;stroke-width:.25px">パス</text>
<text x="1029.4" y="621.4" font-size="13" fill="#8e8e8e" textLength="23" lengthAdjust="spacingAndGlyphs" style="stroke:#8e8e8e;stroke-width:.25px">種類</text>
<text x="1015.8" y="650.6" font-size="13" fill="#8c8c8c" textLength="21.5" lengthAdjust="spacingAndGlyphs" style="stroke:#8c8c8c;stroke-width:.25px">通常</text>
<text x="1170" y="649.4" font-size="13" fill="#8e8e8e" textLength="54.9" lengthAdjust="spacingAndGlyphs" style="stroke:#8e8e8e;stroke-width:.25px">不透明度 :</text>
<text x="1233.6" y="649" font-size="11.5" fill="#828282" textLength="28" lengthAdjust="spacingAndGlyphs">100%</text>
<text x="1010.2" y="678.4" font-size="13" fill="#9c9c9c" textLength="31.6" lengthAdjust="spacingAndGlyphs" style="stroke:#9c9c9c;stroke-width:.25px">ロック :</text>
<text x="1196.6" y="678.4" font-size="13" fill="#8e8e8e" textLength="28.3" lengthAdjust="spacingAndGlyphs" style="stroke:#8e8e8e;stroke-width:.25px">塗り :</text>
<text x="1233.6" y="678" font-size="11.5" fill="#828282" textLength="28" lengthAdjust="spacingAndGlyphs">100%</text>
<text x="1078.6" y="709.2" font-size="13" fill="#f4f4f4" textLength="22.4" lengthAdjust="spacingAndGlyphs" style="stroke:#f4f4f4;stroke-width:.25px">背景</text>
<text x="1114" y="912.6" font-size="13.5" fill="#858585" textLength="11.4" lengthAdjust="spacingAndGlyphs" style="font-style:italic">fx</text>
</svg>
<!-- annotation -->
<svg width="1292" height="928" viewBox="0 0 1292 928" style="z-index:50"><rect x="-0.8" y="663.6" width="52.4" height="60.4" rx="5.5" fill="none" stroke="#e6150b" stroke-width="3.9"/><path d="M122.2 617.6L71.2 651.4L65.6 644.6L53.4 667.6L78.8 663.6L74.2 657.6L122.8 619.2Z" fill="#e6150b"/></svg>
</body></html>
